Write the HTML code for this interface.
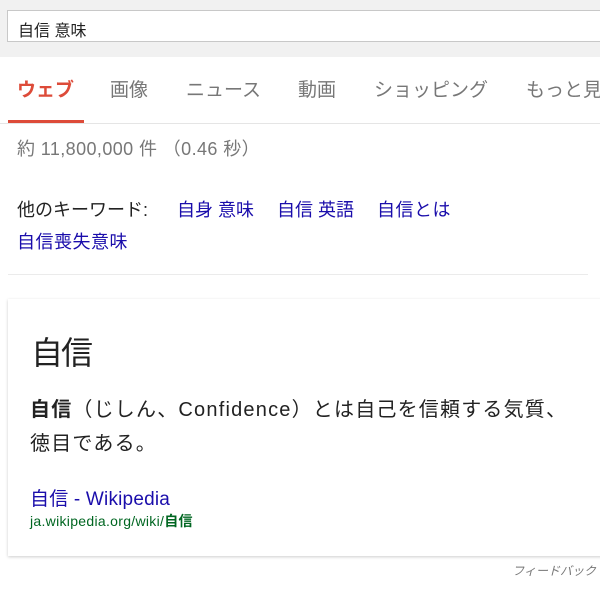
<!DOCTYPE html>
<html><head><meta charset="utf-8"><style>
body{margin:0;width:600px;height:593px;overflow:hidden;background:#fff;font-family:"Liberation Sans","Noto Sans CJK JP",sans-serif;position:relative}
.a{position:absolute;white-space:nowrap}
#top{position:absolute;left:0;top:0;width:600px;height:57px;background:#f1f1f1}
#sb{position:absolute;left:7px;top:10px;width:600px;height:32px;background:#fff;border:1px solid #c8c8c8;box-sizing:border-box}
.t{top:75px;font-size:19px;color:#777}
a{color:#1a0dab;text-decoration:none}
#card{position:absolute;left:8px;top:299px;width:600px;height:257px;background:#fff;box-shadow:0 1px 3px rgba(0,0,0,.2)}
</style></head><body>
<div id="top"></div>
<div id="sb"></div>
<div class="a" style="left:18px;top:17px;font-size:16px;color:#222">自信 意味</div>
<div class="a t" style="left:17px;color:#dd4b39;font-weight:bold">ウェブ</div>
<div class="a t" style="left:110px">画像</div>
<div class="a t" style="left:186px">ニュース</div>
<div class="a t" style="left:298px">動画</div>
<div class="a t" style="left:374px">ショッピング</div>
<div class="a t" style="left:526px">もっと見る</div>
<div class="a" style="left:8px;top:120px;width:76px;height:3px;background:#dd4b39"></div>
<div class="a" style="left:0;top:123px;width:600px;height:1px;background:#e5e5e5"></div>
<div class="a" style="left:17px;top:135px;font-size:18px;color:#777;letter-spacing:.4px">約 11,800,000 件 （0.46 秒）</div>
<div class="a" style="left:17px;top:196px;font-size:18px;color:#222">他のキーワード:</div>
<div class="a" style="left:177px;top:196px;font-size:18px"><a>自身 意味</a></div>
<div class="a" style="left:277px;top:196px;font-size:18px"><a>自信 英語</a></div>
<div class="a" style="left:377px;top:196px;font-size:18px;letter-spacing:.5px"><a>自信とは</a></div>
<div class="a" style="left:17px;top:228px;font-size:18px;letter-spacing:.5px"><a>自信喪失意味</a></div>
<div class="a" style="left:8px;top:274px;width:580px;height:1px;background:#ebebeb"></div>
<div id="card"></div>
<div class="a" style="left:31px;top:328px;font-size:32px;color:#222;letter-spacing:-2px">自信</div>
<div class="a" style="left:30px;top:393px;font-size:20px;color:#222;letter-spacing:1.2px"><b>自信</b>（じしん、Confidence）とは自己を信頼する気質、</div>
<div class="a" style="left:30px;top:427px;font-size:20px;color:#222;letter-spacing:1.2px">徳目である。</div>
<div class="a" style="left:30px;top:484px;font-size:19px;letter-spacing:.2px"><a>自信 - Wikipedia</a></div>
<div class="a" style="left:30px;top:511px;font-size:14px;color:#006621;letter-spacing:.3px">ja.wikipedia.org/wiki/<b>自信</b></div>
<div class="a" style="right:4px;top:562px;font-size:12px;color:#777;font-style:italic">フィードバック</div>
</body></html>
